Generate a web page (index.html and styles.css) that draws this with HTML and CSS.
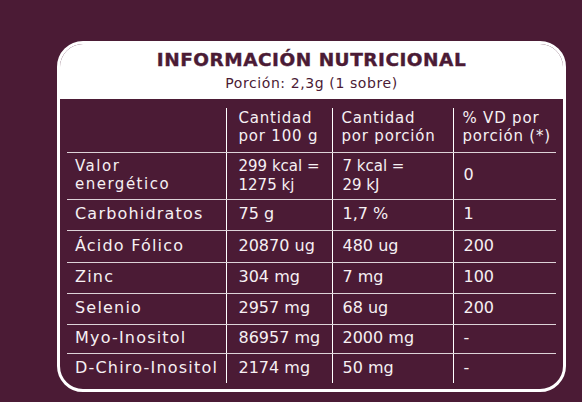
FILE: index.html
```html
<!DOCTYPE html>
<html lang="es">
<head>
  <meta charset="UTF-8">
  <meta name="viewport" content="width=device-width, initial-scale=1.0">
  <title>Información nutricional</title>
  <link rel="stylesheet" href="styles.css">
</head>
<body>
  <div class="card">
    <div class="card-head">
      <h1>INFORMACIÓN NUTRICIONAL</h1>
      <div class="portion">Porción: 2,3g (1 sobre)</div>
    </div>

    <div class="table-wrap">
      <table class="nutri">
        <colgroup>
          <col class="c-name">
          <col class="c-100">
          <col class="c-por">
          <col class="c-vd">
        </colgroup>
        <thead>
          <tr>
            <th></th>
            <th>Cantidad<br>por 100 g</th>
            <th>Cantidad<br>por porción</th>
            <th>% VD por<br>porción (*)</th>
          </tr>
        </thead>
        <tbody>
          <tr class="tall">
            <td class="name two">Valor<br>energético</td>
            <td class="small">299 kcal =<br>1275 kj</td>
            <td class="small">7 kcal =<br>29 kJ</td>
            <td>0</td>
          </tr>
          <tr class="r31">
            <td class="name">Carbohidratos</td>
            <td>75 g</td>
            <td>1,7 %</td>
            <td>1</td>
          </tr>
          <tr class="r32">
            <td class="name">Ácido Fólico</td>
            <td>20870 ug</td>
            <td>480 ug</td>
            <td>200</td>
          </tr>
          <tr class="r31">
            <td class="name">Zinc</td>
            <td>304 mg</td>
            <td>7 mg</td>
            <td>100</td>
          </tr>
          <tr class="r31">
            <td class="name">Selenio</td>
            <td>2957 mg</td>
            <td>68 ug</td>
            <td>200</td>
          </tr>
          <tr class="r29">
            <td class="name">Myo-Inositol</td>
            <td>86957 mg</td>
            <td>2000 mg</td>
            <td>-</td>
          </tr>
          <tr class="r30">
            <td class="name">D-Chiro-Inositol</td>
            <td>2174 mg</td>
            <td>50 mg</td>
            <td>-</td>
          </tr>
        </tbody>
      </table>
    </div>
  </div>
</body>
</html>
```

FILE: styles.css
```css
* {
  margin: 0;
  padding: 0;
  box-sizing: border-box;
}

body {
  font-family: 'DejaVu Sans', 'Liberation Sans', sans-serif;
  background: #4b1b35;
  min-height: 100vh;
  padding: 41px 0 0 57px;
}

.card {
  width: 509px;
  border: 3px solid #ffffff;
  border-radius: 26px;
  background: #4b1b35;
  overflow: hidden;
}

.card-head {
  background: #ffffff;
  height: 55px;
  padding-top: 6px;
  text-align: center;
  color: #4b1b35;
}

.card-head h1 {
  font-size: 18.5px;
  line-height: 20px;
  font-weight: 700;
  letter-spacing: 0.5px;
  -webkit-text-stroke: 0.4px #4b1b35;
}

.portion {
  font-size: 14px;
  line-height: 16px;
  letter-spacing: 0.6px;
  margin-top: 5px;
}

.table-wrap {
  padding: 9px 7px 6px 7px;
}

.nutri {
  width: 489px;
  border-collapse: collapse;
  table-layout: fixed;
  color: #f6f0f3;
}

.c-name { width: 159px; }
.c-100 { width: 106px; }
.c-por { width: 121px; }
.c-vd { width: 103px; }

.nutri th {
  height: 44px;
  font-size: 15px;
  font-weight: 400;
  line-height: 17.5px;
  letter-spacing: 0.8px;
  white-space: nowrap;
  text-align: left;
  vertical-align: top;
  padding: 2px 0 0 9px;
  border-bottom: 1px solid #ddd3d8;
}

.nutri td {
  font-size: 16px;
  line-height: 18.6px;
  white-space: nowrap;
  vertical-align: middle;
  padding: 0 0 0 10px;
  border-bottom: 1px solid #ddd3d8;
}

.nutri th + th,
.nutri td + td {
  border-left: 1px solid #ffffff;
}

.nutri th:nth-child(2),
.nutri td:nth-child(2) {
  padding-left: 12px;
}

.nutri td.name {
  padding-left: 8px;
  letter-spacing: 1.2px;
}

.nutri td.two {
  font-size: 15px;
  line-height: 17.5px;
  letter-spacing: 1.5px;
}

.nutri td.small {
  font-size: 15px;
  line-height: 19px;
}

.nutri tr:last-child td {
  border-bottom: none;
}

.tall td { height: 47px; }
.r29 td { height: 29px; }
.r30 td { height: 30px; }
.r31 td { height: 31px; }
.r32 td { height: 32px; }
```
